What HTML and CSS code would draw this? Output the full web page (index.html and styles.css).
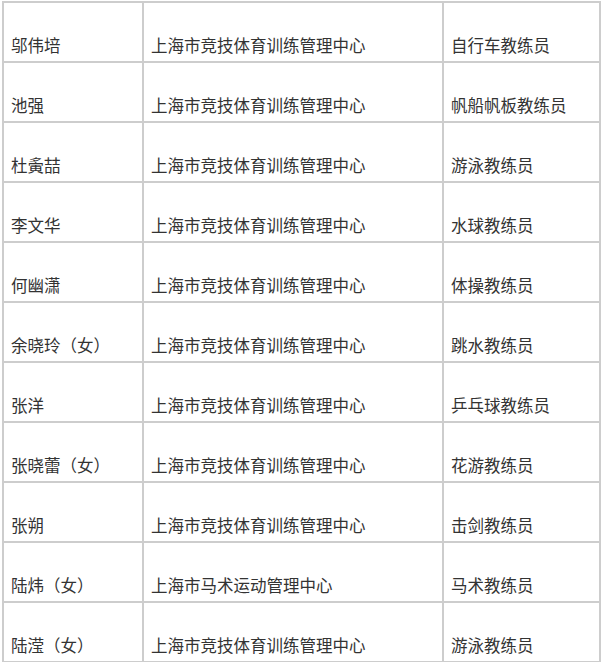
FILE: index.html
```html
<!DOCTYPE html>
<html lang="zh-CN">
<head>
<meta charset="utf-8">
<title>教练员名单</title>
<link rel="stylesheet" href="styles.css">
</head>
<body>
<table class="roster">
  <tbody>
    <tr><td class="c-name">邬伟培</td><td class="c-org">上海市竞技体育训练管理中心</td><td class="c-role">自行车教练员</td></tr>
    <tr><td class="c-name">池强</td><td class="c-org">上海市竞技体育训练管理中心</td><td class="c-role">帆船帆板教练员</td></tr>
    <tr><td class="c-name">杜夤喆</td><td class="c-org">上海市竞技体育训练管理中心</td><td class="c-role">游泳教练员</td></tr>
    <tr><td class="c-name">李文华</td><td class="c-org">上海市竞技体育训练管理中心</td><td class="c-role">水球教练员</td></tr>
    <tr><td class="c-name">何幽潇</td><td class="c-org">上海市竞技体育训练管理中心</td><td class="c-role">体操教练员</td></tr>
    <tr><td class="c-name">余晓玲（女）</td><td class="c-org">上海市竞技体育训练管理中心</td><td class="c-role">跳水教练员</td></tr>
    <tr><td class="c-name">张洋</td><td class="c-org">上海市竞技体育训练管理中心</td><td class="c-role">乒乓球教练员</td></tr>
    <tr><td class="c-name">张晓蕾（女）</td><td class="c-org">上海市竞技体育训练管理中心</td><td class="c-role">花游教练员</td></tr>
    <tr><td class="c-name">张朔</td><td class="c-org">上海市竞技体育训练管理中心</td><td class="c-role">击剑教练员</td></tr>
    <tr><td class="c-name">陆炜（女）</td><td class="c-org">上海市马术运动管理中心</td><td class="c-role">马术教练员</td></tr>
    <tr><td class="c-name">陆滢（女）</td><td class="c-org">上海市竞技体育训练管理中心</td><td class="c-role">游泳教练员</td></tr>
  </tbody>
</table>
</body>
</html>
```
FILE: styles.css
```css
html, body {
  margin: 0;
  padding: 0;
  background: #ffffff;
}

body {
  overflow: hidden;
}

.roster {
  margin: 1px 0 0 2px;
  border-collapse: separate;
  border-spacing: 0;
  border-top: 2px solid #cdcdcd;
  border-left: 2px solid #cdcdcd;
  table-layout: fixed;
  font-family: "Noto Sans CJK SC", "Noto Sans", sans-serif;
  font-size: 16.5px;
  color: #333333;
}

.roster td {
  padding: 30px 0 4px 7px;
  line-height: 24px;
  border-right: 2px solid #cdcdcd;
  border-bottom: 2px solid #cdcdcd;
  white-space: nowrap;
  overflow: hidden;
  text-align: left;
}

.c-name { width: 131px; }
.c-org  { width: 291px; }
.c-role { width: 148px; }
```
